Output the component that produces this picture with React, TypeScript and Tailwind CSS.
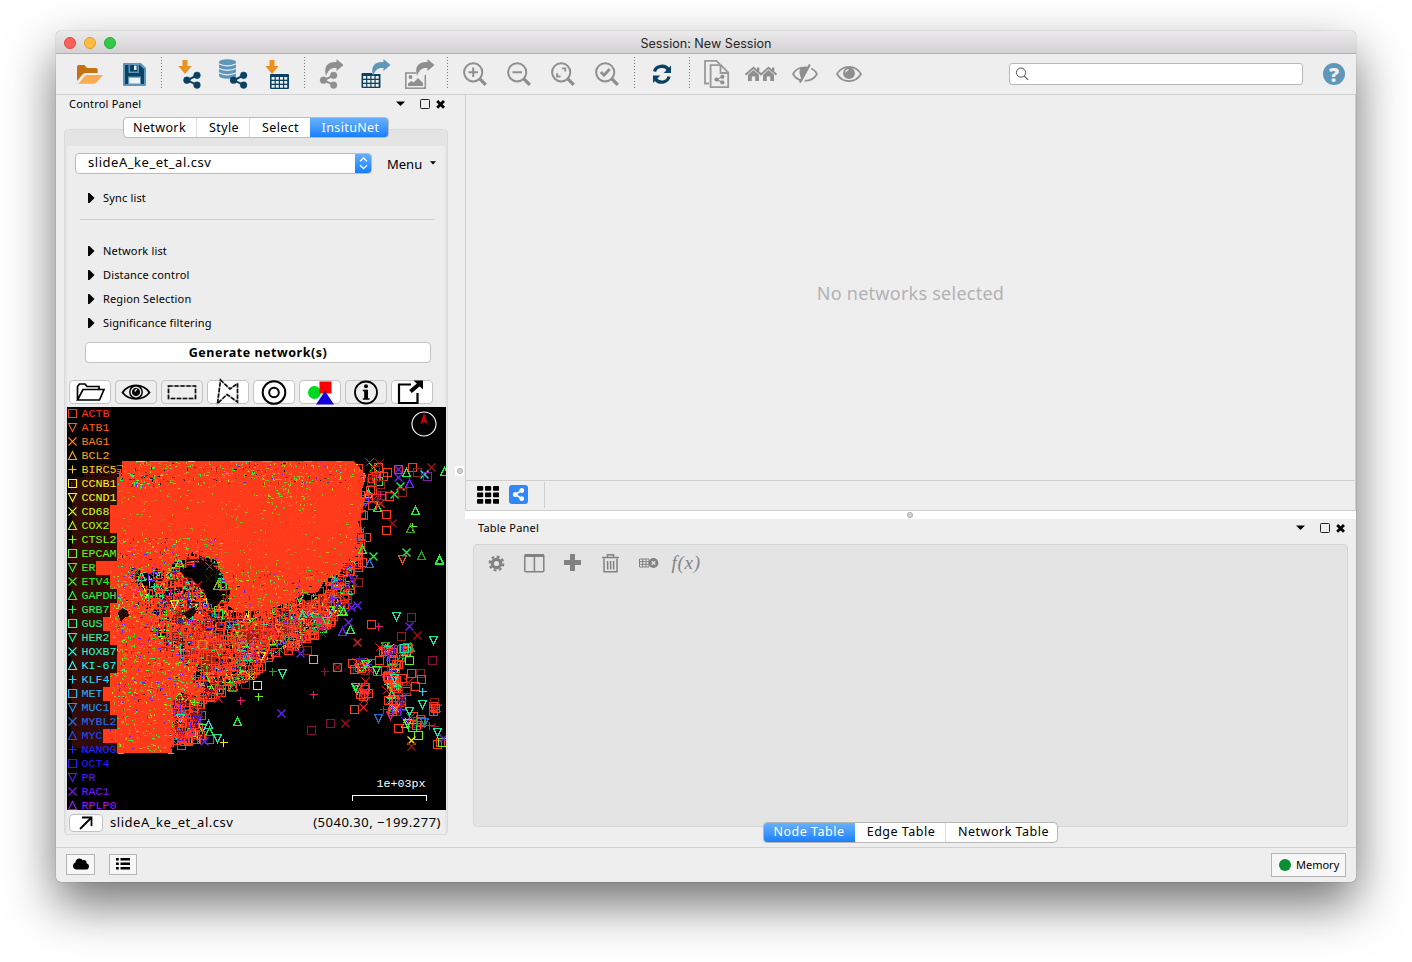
import React, { useMemo } from "react";
import { FaCloud, FaShareAlt } from "react-icons/fa";

const GRAY = "#8f8f8f";
const NAVY = "#0b4264";
const BLUE = "#5f97bb";
const ORANGE = "#ea9123";

/* ---------- toolbar drawings; coordinates are relative to the window bar ---------- */

function Cell({ from, to, children }: { from: number; to: number; children: React.ReactNode }) {
  return (
    <svg className="shrink-0" width={to - from} height={40} viewBox={`${from} 54 ${to - from} 40`}>
      {children}
    </svg>
  );
}

function Share({ x, y, c }: { x: number; y: number; c: string }) {
  return (
    <g fill={c} stroke={c}>
      <path d={`M${x + 13.5} ${y + 3.8} L${x + 3.8} ${y + 8.8} L${x + 13.5} ${y + 13.4}`} fill="none" strokeWidth="2" />
      <circle cx={x + 13.6} cy={y + 3.8} r="3.4" strokeWidth=".4" />
      <circle cx={x + 3.5} cy={y + 8.7} r="3.4" strokeWidth=".4" />
      <circle cx={x + 13.6} cy={y + 13.6} r="3.4" strokeWidth=".4" />
    </g>
  );
}

function Grid({ x, y, c }: { x: number; y: number; c: string }) {
  return (
    <g>
      <rect x={x} y={y} width="19" height="15" rx="1" fill={c} />
      {[0, 1, 2].map((r) =>
        [0, 1, 2, 3].map((k) => (
          <rect key={`${r}${k}`} x={x + 1.6 + k * 4.2} y={y + 3 + r * 4} width="3" height="2.7" fill="#eee" />
        )),
      )}
    </g>
  );
}

const Down = ({ x }: { x: number }) => (
  <path d={`M${x + 4.5} 60h5v6h4.2L${x + 7} 74L${x + 0.3} 66h4.2z`} fill={ORANGE} />
);

const Curl = ({ x, c }: { x: number; c: string }) => (
  <path
    d={`M${x} 76C${x - 3} 65 ${x + 3} 61.5 ${x + 10.5} 62V59L${x + 17.5} 65L${x + 10.5} 71V68C${x + 4.5} 67.6 ${x + 2.4} 70 ${x} 76z`}
    fill={c}
  />
);

const Lens = ({ x, children }: { x: number; children: React.ReactNode }) => (
  <g fill="none" stroke={GRAY}>
    <circle cx={x + 10.2} cy={72.3} r="9.1" strokeWidth="2" />
    <path d={`M${x + 17} 79L${x + 22.8} 84.8`} strokeWidth="3.2" />
    <g strokeWidth="2">{children}</g>
  </g>
);

const Sep = ({ x }: { x: number }) => (
  <path d={`M${x + 0.5} 57V90`} stroke="#777" strokeWidth="1" strokeDasharray="1 2" />
);

function Toolbar() {
  return (
    <div className="flex h-[41px] shrink-0 border-b border-[#d1d1d1] bg-[#eeeeee]">
      <Cell from={56} to={113}>
        <path d="M77 81V66.5Q77 65 78.5 65H84.5L87 68H96Q97.7 68 97.7 70V73H86Q83.5 73 82 75z" fill="#c57214" />
        <path d="M78.3 83.8L84.8 76Q85.6 75 87 75H103L96.3 82.7Q95.3 83.8 94 83.8z" fill="#fbab52" />
      </Cell>
      <Cell from={113} to={156}>
        <path d="M123 64Q123 63 124 63H141L146 68V85Q146 86 145 86H124Q123 86 123 85z" fill={BLUE} />
        <path d="M125 65H139.8L144 69.2V84H125z" fill={NAVY} />
        <path d="M128.5 64.5H139V73H128.5zM128 76.5H141V84H128z" fill={BLUE} />
        <path d="M130 65H137.5V71.5H130z" fill={NAVY} />
        <path d="M134 65.5H136.6V70H134z" fill="#e5eef4" />
        <path d="M129.2 77.8H140V83.5H129.2z" fill="#eef3f6" />
      </Cell>
      <Cell from={156} to={212}>
        <Sep x={161} />
        <Down x={178} />
        <Share x={183.4} y={71.5} c={NAVY} />
      </Cell>
      <Cell from={212} to={258}>
        <path d="M219 62.5V75.5C219 79.8 236 79.8 236 75.5V62.5z" fill={BLUE} />
        <ellipse cx="227.5" cy="62" rx="8.7" ry="2.8" fill={BLUE} />
        <path d="M218.5 63.8Q227.5 68 236.5 63.8M218.5 68.3Q227.5 72.5 236.5 68.3M218.5 72.8Q227.5 77 236.5 72.8" fill="none" stroke="#eee" strokeWidth="1.2" />
        <Share x={230} y={71.5} c={NAVY} />
      </Cell>
      <Cell from={258} to={312}>
        <Down x={265} />
        <Grid x={270} y={74} c={NAVY} />
        <Sep x={304} />
      </Cell>
      <Cell from={312} to={355}>
        <Share x={320} y={71.5} c={GRAY} />
        <Curl x={326} c={GRAY} />
      </Cell>
      <Cell from={355} to={399}>
        <Grid x={361.5} y={73} c={NAVY} />
        <path d="M372 71H382V74H372z" fill="#eee" />
        <Curl x={373} c={BLUE} />
      </Cell>
      <Cell from={399} to={453}>
        <rect x="405.8" y="73" width="19.5" height="15.2" fill="none" stroke={GRAY} strokeWidth="1.5" />
        <circle cx="410.5" cy="77" r="1.9" fill={GRAY} />
        <path d="M408 86V83.5L411.5 81L413.5 82.5L418 78L423 83V86z" fill={GRAY} />
        <path d="M416 71.5H426V75H416z" fill="#eee" />
        <Curl x={417} c={GRAY} />
        <Sep x={447} />
      </Cell>
      <Cell from={453} to={497}>
        <Lens x={463}><path d="M468.5 72.3H478M473.2 67.5V77" /></Lens>
      </Cell>
      <Cell from={497} to={541}>
        <Lens x={507}><path d="M512.5 72.3H522" /></Lens>
      </Cell>
      <Cell from={541} to={585}>
        <Lens x={551}>
          <path d="M562 68.3H565.3V71.5M560.5 76.5H557V73.2" strokeWidth="1.8" />
        </Lens>
      </Cell>
      <Cell from={585} to={641}>
        <Lens x={595}><path d="M600.8 72L604 75.3L609.8 69" strokeWidth="2.8" /></Lens>
        <Sep x={634} />
      </Cell>
      <Cell from={641} to={697}>
        <path d="M654.5 71.5C656 65.5 665 64.5 668.3 69.5M669 76.5C667.5 83 659 84 655.4 79" fill="none" stroke={NAVY} strokeWidth="3.3" />
        <path d="M671 65.5V73H663.7zM653 83V75.5H660.3z" fill={NAVY} />
        <Sep x={689} />
      </Cell>
      <Cell from={697} to={737}>
        <path d="M709 83.5H705V60.8H716.5L720 64.5" fill="none" stroke="#999" strokeWidth="1.8" />
        <path d="M710.6 65.2H721L728.2 72.5V87.2H710.6zM720.5 65.5V73H728" fill="#eee" stroke="#999" strokeWidth="1.8" />
        <g transform="translate(714.5 74.5) scale(.58)"><Share x={0} y={0} c={GRAY} /></g>
      </Cell>
      <Cell from={737} to={785}>
        {[746, 761].map((x) => (
          <g key={x}>
            <path d={`M${x - 0.5} 74.8L${x + 7.5} 67.8L${x + 15.5} 74.8`} fill="none" stroke={GRAY} strokeWidth="2" />
            <path d={`M${x + 2} 74.8L${x + 7.5} 70L${x + 13} 74.8V81H${x + 9.2}V76.5H${x + 5.8}V81H${x + 2}z`} fill={GRAY} />
            <path d={`M${x + 11} 67.5h2.3v4h-2.3z`} fill={GRAY} />
          </g>
        ))}
      </Cell>
      <Cell from={785} to={829}>
        <path d="M793 74C798 65 812 65 817 74C812 83 798 83 793 74z" fill="none" stroke={GRAY} strokeWidth="1.6" />
        <path d="M800 68.5C798.5 75 801 79 804 80.5L809 68.2Q804 66 800 68.5z" fill={GRAY} />
        <path d="M811.3 66L802.5 82.5" stroke="#eee" strokeWidth="2.2" />
        <path d="M809.8 64.5L799.8 82.5" stroke={GRAY} strokeWidth="2.2" />
      </Cell>
      <Cell from={829} to={879}>
        <path d="M837 74C842.5 64.5 855.5 64.5 861 74C855.5 83.5 842.5 83.5 837 74z" fill="none" stroke={GRAY} strokeWidth="1.7" />
        <circle cx="849" cy="73.2" r="5.9" fill={GRAY} />
        <path d="M845.6 72.5Q846 70 848.5 69.6" stroke="#eee" strokeWidth="1.2" fill="none" />
      </Cell>
      <div className="flex flex-1 items-center justify-end pr-[11px]">
        <div className="flex h-[22px] w-[294px] items-center rounded-[3px] border border-[#b9b9b9] bg-white pl-[5px]">
          <svg width="15" height="14" viewBox="0 0 15 14" fill="none" stroke="#555">
            <circle cx="6" cy="5.6" r="4.6" strokeWidth="1" />
            <path d="M9.3 9.1L13 12.8" strokeWidth="1.2" />
          </svg>
        </div>
        <div className="ml-5 flex size-[22px] items-center justify-center rounded-full bg-[#5f97bb] pt-px font-['Open_Sans',sans-serif] text-[20px] leading-none font-extrabold text-[#eeeeee]">
          ?
        </div>
      </div>
    </div>
  );
}

/* ---------- spatial plot ---------- */

type Kind = "s" | "u" | "d" | "x" | "p";
type Pt = [number, number];

const GENES = [
  "ACTB", "ATB1", "BAG1", "BCL2", "BIRC5", "CCNB1", "CCND1", "CD68", "COX2", "CTSL2",
  "EPCAM", "ER", "ETV4", "GAPDH", "GRB7", "GUS", "HER2", "HOXB7", "KI-67", "KLF4",
  "MET", "MUC1", "MYBL2", "MYC", "NANOG", "OCT4", "PR", "RAC1", "RPLP0",
];
const KINDS: Kind[] = ["s", "d", "x", "u", "p"];

const glyph = (k: Kind, x: number, y: number) => {
  const a = Math.round(x) + 0.5;
  const b = Math.round(y) + 0.5;
  if (k === "s") return `M${a - 4} ${b - 4}h8v8h-8z`;
  if (k === "u") return `M${a} ${b - 4}l4 8h-8z`;
  if (k === "d") return `M${a} ${b + 4}l4 -8h-8z`;
  if (k === "x") return `M${a - 4} ${b - 4}l8 8m0 -8l-8 8`;
  return `M${a - 4} ${b}h8m-4 -4v8`;
};

const COLORS: Record<string, string> = {
  R: "#ff3b1b", r: "#8b2412", e: "#e01f1f", k: "#9c1616", G: "#22f046", g: "#2f9a26", L: "#6cf01e",
  T: "#1ee8a0", P: "#6a22f0", p: "#4420a0", M: "#e01870", m: "#8a1040", Y: "#f5e61e", C: "#20d8f0",
  B: "#1d72d8", O: "#e0561a", V: "#8a1ea8",
};

const MARKS = `sR378,467 sr375,470 sR387,472 sR383,476 sR398,469 xP398,469 sR412,467 sr417,472 xk431,467 uG406,472
xC424,474 sV427,476 uG444,471 xP398,477 sr380,484 xG400,486 uP409,483 xG394,494 sR389,496 sr402,492 uG377,507 xe380,503
sR372,505 sR386,514 uG415,510 xk392,523 pL412,526 ug410,528 sR386,530 xG373,556 xG406,552 dO402,559 ug421,555 uG439,559
uG439,560 sR362,562 uB369,563 sr358,582 xe346,600 xP357,605 xP351,607 sR370,490 sR368,497 xe373,475 sr371,481 sR366,537
sr361,537 uG362,549 dT396,616 sr411,617 xP409,626 sR371,624 pM378,626 uG350,629 xP348,622 uG343,611 xe334,614 sr401,636
xk417,635 dT433,640 xe357,642 sg317,620 sr307,650 sL313,659 xP300,653 sL337,667 xk337,667 sR337,667 pm324,671 pg272,671
dT282,673 pM313,694 xP281,713 sm311,730 sm330,723 xk345,723 sY257,685 pL258,696 dB378,718 sR354,709 xe363,707 sL409,660
sm432,660 sr420,673 sR421,679 sR415,686 pC422,691 sR406,691 sr406,689 xk402,704 dT422,704 dT409,711 sR433,706 sr434,702
xe433,707 sR435,708 dB424,722 pM429,725 pm434,726 sR398,728 sL418,735 xY411,740 xk411,746 dT437,732 sR437,744 sR440,742
sL442,742 xP443,738 uC208,724 uG209,731 sg209,739 dT217,738 pY223,742 xP204,741 uG237,721 pM240,700 xe218,698 sr245,684
sR232,687 sr197,710 sR193,707 sR200,735`
  .trim()
  .split(/\s+/)
  .map((m) => {
    const [x, y] = m.slice(2).split(",").map(Number);
    return { k: m[0] as Kind, c: m[1], x, y };
  });

const TISSUE: Pt[] = [
  [74, 480], [90, 470], [118, 466], [130, 464], [355, 464], [364, 475], [366, 500], [361, 530], [358, 560], [352, 590],
  [340, 612], [318, 632], [298, 646], [270, 656], [250, 682], [222, 692], [200, 704], [202, 735], [190, 748], [74, 748],
];
const CORE: Pt[] = [
  [122, 461], [354, 461], [360, 468], [366, 476], [362, 490], [363, 505], [358, 520], [360, 532], [353, 545], [354, 556],
  [344, 562], [340, 573], [326, 578], [318, 592], [304, 594], [290, 602], [276, 606], [262, 613], [250, 610], [240, 613],
  [228, 606], [230, 590], [222, 575], [216, 560], [206, 558], [192, 552], [184, 560], [174, 562], [168, 572], [156, 568],
  [150, 574], [138, 570], [128, 576], [117, 564], [117, 479], [122, 476],
];
const WEST: Pt[] = [
  [72, 480], [117, 474], [120, 560], [134, 566], [132, 580], [146, 592], [142, 606], [158, 616], [150, 632], [164, 640],
  [160, 652], [178, 650], [182, 664], [196, 668], [192, 682], [206, 688], [198, 697], [180, 692], [172, 702], [174, 720],
  [170, 735], [172, 753], [117, 753], [110, 750], [72, 748],
];
const MID: Pt[][] = [
  [[178, 625], [196, 622], [208, 634], [222, 632], [226, 648], [216, 660], [224, 672], [206, 676], [198, 664], [184, 656], [188, 642]],
  [[232, 624], [256, 620], [268, 628], [288, 618], [304, 622], [292, 636], [272, 640], [262, 650], [248, 644], [236, 652], [228, 640]],
  [[300, 602], [318, 598], [332, 588], [340, 594], [328, 608], [316, 616], [302, 612]],
];
const HOLES: Pt[][] = [
  [[180, 570], [190, 566], [196, 568], [200, 560], [212, 562], [214, 567], [220, 571], [217, 582], [219, 590], [222, 598], [217, 606], [208, 603], [204, 590], [198, 588], [192, 578], [184, 577]],
  [[118, 613], [122, 608], [128, 611], [129, 616], [124, 618], [121, 623]],
  [[183, 614], [190, 609], [195, 607], [196, 613], [189, 619]],
];

const inside = (poly: Pt[], x: number, y: number) => {
  let hit = false;
  for (let i = 0, j = poly.length - 1; i < poly.length; j = i++) {
    const [xi, yi] = poly[i];
    const [xj, yj] = poly[j];
    if (yi > y !== yj > y && x < ((xj - xi) * (y - yi)) / (yj - yi) + xi) hit = !hit;
  }
  return hit;
};

const toPath = (poly: Pt[]) => `M${poly.map((p) => p.join(" ")).join("L")}z`;

function buildPlot() {
  let seed = 7331;
  const rnd = () => {
    seed = (seed * 1664525 + 1013904223) >>> 0;
    return seed / 4294967296;
  };
  const pick = (s: string) => s[Math.floor(rnd() * s.length)];
  const layers: { d: string; c: string }[] = [];
  for (let pass = 0; pass < 15; pass++) {
    const bucket: Record<string, string> = {};
    for (let n = 0; n < 330; n++) {
      const x = 72 + rnd() * 300;
      const y = 464 + rnd() * 286;
      if (!inside(TISSUE, x, y) || inside(CORE, x, y)) continue;
      if (HOLES.some((h) => inside(h, x, y)) && rnd() < 0.96) continue;
      const red = rnd() < 0.7;
      const c = red ? pick("RRRRRRre") : pick("GgLTPPpMkBYm");
      const k = red ? (c === "e" ? "x" : "s") : (pick("sudxp") as Kind);
      bucket[c] = (bucket[c] || "") + glyph(k, x, y);
    }
    for (const c of Object.keys(bucket)) layers.push({ d: bucket[c], c: COLORS[c] });
  }
  let edge = "";
  for (let n = 0; n < 60; n++) {
    const y = 468 + rnd() * 100;
    edge += glyph("s", 346 + rnd() * 14, y);
  }
  const cluster: { d: string; c: string }[] = [];
  const spots: [number, number, number, number, number][] = [
    [385, 650, 6, 6, 14], [404, 650, 6, 6, 12], [362, 668, 10, 7, 20], [393, 678, 7, 14, 34], [363, 690, 10, 9, 15],
    [394, 704, 8, 10, 22], [412, 722, 8, 6, 14], [387, 665, 20, 16, 16], [320, 617, 18, 14, 30], [374, 482, 6, 16, 14],
    [434, 707, 3, 3, 5], [188, 726, 10, 17, 22],
  ];
  for (const [cx, cy, rx, ry, count] of spots)
    for (let n = 0; n < count; n++) {
      const c = pick("RRRRRRreekPPGTgLMp");
      const k: Kind = "Rr".includes(c) ? "s" : "ek".includes(c) ? "x" : (pick("sudxp") as Kind);
      cluster.push({ d: glyph(k, cx + (rnd() + rnd() - 1) * rx * 1.4, cy + (rnd() + rnd() - 1) * ry * 1.4), c: COLORS[c] });
    }
  const specks: Record<string, string> = {};
  const speckle = (count: number, x0: number, y0: number, w: number, h: number, colors: string[], test: (x: number, y: number) => boolean) => {
    for (let n = 0; n < count; n++) {
      const x = Math.floor(x0 + rnd() * w);
      const y = Math.floor(y0 + rnd() * h);
      if (!test(x, y)) continue;
      const c = colors[Math.floor(rnd() * colors.length)];
      const len = rnd() < 0.25 ? 3 : 1 + Math.floor(rnd() * 2);
      specks[c] = (specks[c] || "") + (rnd() < 0.6 ? `M${x} ${y}h${len}v1h${-len}z` : `M${x} ${y}h1v${len}h-1z`);
    }
  };
  const olive = ["#b8941a", "#c8741a", "#8fae1c", "#c8741a", "#7ab81e", "#d2a81c"];
  const vivid = ["#46e02a", "#22f046", "#a8e01e", "#6a22f0", "#1ee8a0", "#e01870", "#180502", "#9c2a12"];
  const core = (x: number, y: number) => inside(CORE, x, y);
  speckle(560, 117, 462, 248, 150, olive, core);
  speckle(330, 117, 462, 248, 22, olive.concat(vivid), core);
  speckle(420, 117, 538, 105, 50, olive.concat(vivid), core);
  speckle(240, 225, 570, 120, 44, olive.concat(vivid), core);
  speckle(100, 262, 475, 48, 36, ["#7ab81e", "#46e02a", "#c8b01c"], () => true);
  speckle(60, 130, 474, 34, 14, vivid, core);
  speckle(850, 110, 570, 90, 182, olive.concat(vivid.slice(0, 4)), (x, y) => inside(WEST, x, y));
  speckle(2000, 117, 560, 240, 140, olive.concat(vivid, vivid), (x, y) => inside(TISSUE, x, y) && !inside(CORE, x, y) && !HOLES.some((h) => inside(h, x, y)));
  return { layers, edge, cluster, specks };
}

function Plot() {
  const { layers, edge, cluster, specks } = useMemo(buildPlot, []);
  return (
    <svg className="block shrink-0 bg-black" width="379" height="403" viewBox="67 407 379 403">
      <g shapeRendering="crispEdges" fill="none" strokeWidth="1">
        {layers.map((l, i) => (
          <path key={i} d={l.d} stroke={l.c} />
        ))}
        <path d={toPath(WEST)} fill="#ff3b1b" />
        <path d={toPath(CORE)} fill="#ff3b1b" />
        {MID.map((m, i) => (
          <path key={i} d={toPath(m)} fill="#ff3b1b" fillOpacity=".6" />
        ))}
        <path d={edge} stroke="#ff3b1b" />
        <path d="M150 461.5h18M230 461.5h22M262 461.5h10M304 461.5h8M336 461.5h6" stroke="#28d878" />
        <path d="M136 461.5h9M188 461.5h7" stroke="#e8d81c" />
        <path d="M118 753.5h6M168 753h6" stroke="#22f046" />
        {Object.entries(specks).map(([c, d]) => (
          <path key={c} d={d} fill={c} />
        ))}
        {HOLES.map((h, i) => (
          <path key={i} d={toPath(h)} fill="#000" fillOpacity=".86" />
        ))}
        <path d={glyph("x", 197, 585) + glyph("x", 209, 566)} stroke="#e01f1f" />
        <path d={glyph("u", 217, 585)} stroke="#8fae1c" />
        {cluster.map((m, i) => (
          <path key={i} d={m.d} stroke={m.c} />
        ))}
        {MARKS.map((m, i) => (
          <path key={i} d={glyph(m.k, m.x, m.y)} stroke={COLORS[m.c]} shapeRendering={m.k === "x" ? "auto" : undefined} strokeWidth={m.k === "x" ? 1.4 : 1} />
        ))}
      </g>
      {GENES.map((g, i) => {
        const color = `hsl(${8 + i * 9.5} 100% 55%)`;
        const y = 407 + i * 14;
        return (
          <g key={g}>
            <rect x="67" y={y} width={15 + g.length * 7} height="14" fill="#000" fillOpacity=".8" />
            <path d={glyph(KINDS[i % 5], 72, y + 6)} fill="none" stroke={color} strokeWidth="1.1" />
            <text x="81.5" y={y + 10} fill={color} className="font-['Liberation_Mono',monospace] text-[11.67px]">
              {g}
            </text>
          </g>
        );
      })}
      <circle cx="424" cy="424" r="12" fill="none" stroke="#fff" strokeWidth="1.1" />
      <path d="M424 412.5L427.5 424L424 421.8L420.5 424z" fill="#d40000" />
      <text x="376.5" y="787" fill="#fff" className="font-['Liberation_Mono',monospace] text-[11.67px]">
        1e+03px
      </text>
      <path d="M352.5 800.5V795.5H426.5V800.5" fill="none" stroke="#fff" shapeRendering="crispEdges" />
    </svg>
  );
}

/* ---------- shared pieces ---------- */

function PanelHeader({ title }: { title: string }) {
  return (
    <div className="flex h-[18px] shrink-0 items-center pr-0.5 pl-[13px]">
      <span className="flex-1 text-[11px] tracking-[0.2px]">{title}</span>
      <svg width="50" height="12" viewBox="0 0 50 12">
        <path d="M0 3.5h9L4.5 8z" />
        <rect x="24.5" y="1.5" width="9" height="9" rx="1" fill="none" stroke="#222" />
        <path d="M41.2 3L48 9.8M48 3L41.2 9.8" stroke="#000" strokeWidth="2.8" />
      </svg>
    </div>
  );
}

function Disclosure({ label }: { label: string }) {
  return (
    <div className="flex h-6 items-center gap-2 pl-[21px] text-[11px] tracking-[0.16px]">
      <svg width="7" height="10" viewBox="0 0 7 10">
        <path d="M0 0h1.5L6.5 5L1.5 10H0z" />
      </svg>
      {label}
    </div>
  );
}

const toolIcons: { flat: boolean; art: React.ReactNode }[] = [
  {
    flat: false,
    art: <path d="M8.5 20V6.5L10.5 4H16L18 6.5H30V9M8.5 20L14 9.5H35L30.5 20z" fill="none" stroke="#000" strokeWidth="1.7" />,
  },
  {
    flat: true,
    art: (
      <g fill="none" stroke="#000">
        <path d="M7.5 12.5C14 3 28 3 34.5 12.5C28 21 14 21 7.5 12.5z" strokeWidth="1.8" />
        <circle cx="21" cy="12" r="6.2" strokeWidth="1.5" />
        <circle cx="21" cy="12" r="3.6" fill="#000" />
        <path d="M20 11.5Q20.4 9.5 22 9.5" stroke="#fff" strokeWidth="1.3" />
      </g>
    ),
  },
  {
    flat: true,
    art: (
      <g fill="none">
        <rect x="7.5" y="6" width="27" height="12.5" stroke="#999" strokeWidth="1.6" />
        <rect x="7.5" y="6" width="27" height="12.5" stroke="#111" strokeWidth="1.6" strokeDasharray="4 2" />
      </g>
    ),
  },
  {
    flat: false,
    art: (
      <g fill="none">
        <path d="M13.5 0L23 9L30.5 3.5V22L20 14.5L10.5 23.5z" stroke="#999" strokeWidth="1.6" />
        <path d="M13.5 0L23 9L30.5 3.5V22L20 14.5L10.5 23.5z" stroke="#111" strokeWidth="1.6" strokeDasharray="4 1.6" />
      </g>
    ),
  },
  {
    flat: false,
    art: (
      <g fill="none" stroke="#000" strokeWidth="2">
        <circle cx="21" cy="12.5" r="11.3" />
        <circle cx="21" cy="12.5" r="4.8" />
      </g>
    ),
  },
  {
    flat: false,
    art: (
      <g>
        <circle cx="15.5" cy="12.5" r="6.5" fill="#00d820" />
        <path d="M20.5 1.5H32.5V13.5H20.5z" fill="#f00" />
        <path d="M26 11L35 24.5H17z" fill="#1400d8" />
      </g>
    ),
  },
  {
    flat: true,
    art: (
      <g>
        <circle cx="21" cy="12.5" r="11" fill="none" stroke="#000" strokeWidth="1.8" />
        <circle cx="21" cy="6.3" r="2" />
        <path d="M17.8 9.8H23V18.2H24.5V19.7H17.8V18.2H19.2V11.3H17.8z" />
      </g>
    ),
  },
  {
    flat: false,
    art: (
      <g>
        <path d="M20 4.5H8V23H26.5V13" fill="none" stroke="#000" strokeWidth="2.2" />
        <path d="M19.5 11.5L29 3.5" stroke="#000" strokeWidth="4" />
        <path d="M22.5 .5H32V9.5z" />
      </g>
    ),
  },
];

function ControlPanel() {
  return (
    <div className="flex w-[392px] shrink-0 flex-col">
      <PanelHeader title="Control Panel" />
      <div className="z-10 mt-1 -mb-[9px] ml-[67px] flex h-[21px] w-[266px] shrink-0 overflow-hidden rounded-[4px] border border-[#bcbcbc] bg-white text-[12.5px] leading-[19px] tracking-[0.38px]">
        <span className="w-[73px] border-r border-[#dcdcdc] pr-px text-center">Network</span>
        <span className="w-[53px] border-r border-[#dcdcdc] pl-0.5 text-center">Style</span>
        <span className="w-[61px] text-center">Select</span>
        <span className="-m-px h-[21px] flex-1 bg-linear-to-b from-[#6ab3fb] to-[#0f7cfd] pt-px pl-0.5 text-center text-white">InsituNet</span>
      </div>
      <div className="ml-2 flex h-[706px] w-[384px] flex-col rounded-[4px] border border-[#dadada] bg-[#e4e4e4] px-[2px] pt-4">
        <div className="flex min-h-0 flex-1 flex-col bg-[#ededed]">
          <div className="flex h-[34px] shrink-0 items-center pl-2">
            <div className="flex h-[21px] w-[297px] items-center overflow-hidden rounded-[4px] border border-[#bcbcbc] bg-white">
              <span className="flex-1 pl-3 text-[13px] tracking-[0.53px]">slideA_ke_et_al.csv</span>
              <svg className="-my-px -mr-px" width="17" height="21" viewBox="0 0 17 21">
                <defs>
                  <linearGradient id="knob" x1="0" y1="0" x2="0" y2="1">
                    <stop offset="0" stopColor="#6ab3fb" />
                    <stop offset="1" stopColor="#0f7cfd" />
                  </linearGradient>
                </defs>
                <rect width="17" height="21" fill="url(#knob)" />
                <path d="M5 8.2L8.5 5L12 8.2M5 12.3L8.5 15.5L12 12.3" fill="none" stroke="#fff" strokeWidth="1.3" />
              </svg>
            </div>
            <span className="ml-[15px] pt-[3px] text-[13px]">Menu</span>
            <svg className="ml-2" width="6" height="4" viewBox="0 0 6 4">
              <path d="M0 .3h6L3 3.6z" />
            </svg>
          </div>
          <div className="mt-1.5">
            <Disclosure label="Sync list" />
          </div>
          <div className="mt-[9px] mr-2.5 ml-[13px] h-px shrink-0 bg-[#d0d0d0]" />
          <div className="mt-[19px]">
            <Disclosure label="Network list" />
            <Disclosure label="Distance control" />
            <Disclosure label="Region Selection" />
            <Disclosure label="Significance filtering" />
          </div>
          <div className="mt-[7px] ml-[18px] flex h-[21px] w-[346px] shrink-0 items-center justify-center rounded-[4px] border border-[#c2c2c2] bg-white pt-px text-[12.5px] font-bold tracking-[0.52px]">
            Generate network(s)
          </div>
          <div className="mt-[17px] mb-[2px] ml-[2px] flex h-[25px] shrink-0 gap-1">
            {toolIcons.map((t, i) => (
              <div
                key={i}
                className={
                  t.flat
                    ? "h-6 w-[42px] rounded-[4px] border border-[#c4c4c4] bg-[#eeeeee]"
                    : "h-6 w-[42px] rounded-[4px] border border-[#c4c4c4] bg-white"
                }
              >
                <svg className="-m-px overflow-visible" width="42" height="24" viewBox="0 0 42 24">
                  {t.art}
                </svg>
              </div>
            ))}
          </div>
          <Plot />
          <div className="flex h-6 shrink-0 items-center pt-px pr-1 pl-[2px] text-[13px]">
            <div className="flex h-[18px] w-[34px] items-center justify-center rounded-[4px] border border-[#c2c2c2] bg-white">
              <svg width="14" height="14" viewBox="0 0 14 14" fill="none" stroke="#000" strokeWidth="1.8">
                <path d="M1 13L12.5 1.5M3 1.5H12.5V10" />
              </svg>
            </div>
            <span className="ml-[7px] flex-1 tracking-[0.53px]">slideA_ke_et_al.csv</span>
            <span className="tracking-[0.5px]">(5040.30, −199.277)</span>
          </div>
        </div>
      </div>
    </div>
  );
}

function TableTools() {
  return (
    <svg className="mt-[7px] ml-[13px] block" width="220" height="22" viewBox="487 552 220 22" fill="#828282">
      <g stroke="#828282" fill="none">
        <circle cx="496.5" cy="563.5" r="4.2" strokeWidth="3.2" />
        <circle cx="496.5" cy="563.5" r="6.8" strokeWidth="2.2" strokeDasharray="2.9 2.44" />
        <rect x="524.8" y="554.8" width="19" height="17" rx="1" strokeWidth="1.5" />
        <path d="M525 555.5H544" strokeWidth="3" />
        <path d="M534.4 556V572" strokeWidth="1.5" />
        <path d="M572.5 554V571M564 562.5H581" strokeWidth="5" />
        <path d="M602 557.5H619M607.5 557V554.7H613.5V557M604 558.5V571.8H617V558.5M607.6 561V569.5M610.6 561V569.5M613.6 561V569.5" strokeWidth="1.5" />
        <path d="M639.5 559H649V567H639.5zM639.5 561.5H649M639.5 564.3H649M642.7 559V567M646 559V567" strokeWidth="1" />
      </g>
      <circle cx="653.5" cy="563" r="4.9" />
      <path d="M651.7 561.2L655.3 564.8M655.3 561.2L651.7 564.8" stroke="#e4e4e4" strokeWidth="1.3" />
      <text x="671.5" y="569" className="font-['Liberation_Serif',serif] text-[19px] italic" textLength="28.5">
        f(x)
      </text>
    </svg>
  );
}

export default function App() {
  return (
    <div className="h-[962px] w-[1412px] overflow-hidden bg-white pt-[31px] pl-14 font-['Noto_Sans',sans-serif] text-black">
      <div className="flex h-[851px] w-[1300px] flex-col overflow-hidden rounded-[5px] bg-[#eeeeee] shadow-[0_22px_50px_rgba(0,0,0,0.56),0_0_1px_rgba(0,0,0,0.6)]">
        <div className="flex h-[23px] shrink-0 items-center border-b border-[#b1afb1] bg-linear-to-b from-[#ebeaeb] to-[#d3d1d3]">
          <div className="flex w-[72px] gap-2 pt-0.5 pl-2">
            <span className="size-3 rounded-full border border-[#e2463f] bg-[#fc605b]" />
            <span className="size-3 rounded-full border border-[#dfa023] bg-[#fdbc40]" />
            <span className="size-3 rounded-full border border-[#1fae36] bg-[#34c84a]" />
          </div>
          <span className="flex-1 pt-1 pr-[72px] text-center font-['Inter',sans-serif] text-[12.6px] text-[#262626]">Session: New Session</span>
        </div>
        <Toolbar />
        <div className="flex min-h-0 flex-1">
          <ControlPanel />
          <div className="flex w-[17px] shrink-0 flex-col items-end pr-px">
            <div className="mt-[371px] flex h-[10px] w-[9px] items-center justify-center bg-white">
              <span className="size-[6px] rounded-full border border-[#aaa] bg-[#d4d4d4]" />
            </div>
          </div>
          <div className="flex flex-1 flex-col">
            <div className="flex h-[416px] shrink-0 flex-col border-r border-b border-l border-[#cfcfcf]">
              <div className="flex flex-1 items-center justify-center pt-[11px] text-[18px] tracking-[0.25px] text-[#b2b2b2]">No networks selected</div>
              <div className="flex h-[30px] items-center border-t border-[#d0d0d0] pb-0.5 pl-[11px]">
                <svg width="22" height="18" viewBox="0 0 22 18">
                  {[0, 6.5, 13].map((y) => [0, 8, 16].map((x) => <rect key={`${x}-${y}`} x={x} y={y} width="6.2" height="4.8" rx="1" />))}
                </svg>
                <div className="ml-2.5 flex size-[19px] items-center justify-center rounded-[3px] bg-[#3087fc] text-[13px] text-white">
                  <FaShareAlt />
                </div>
                <div className="ml-4 h-[26px] w-px bg-[#cfcfcf]" />
              </div>
            </div>
            <div className="flex h-2 shrink-0 items-center justify-center bg-white pr-0.5">
              <span className="size-[6px] rounded-full border border-[#aaa] bg-[#d4d4d4]" />
            </div>
            <div className="pr-2">
              <PanelHeader title="Table Panel" />
            </div>
            <div className="mt-[7px] ml-2 h-[283px] w-[875px] shrink-0 rounded-[4px] border border-[#d6d6d6] bg-[#e4e4e4]">
              <TableTools />
            </div>
            <div className="z-10 -mt-[5px] ml-[298px] flex h-[21px] w-[295px] shrink-0 overflow-hidden rounded-[4px] border border-[#b6b6b6] bg-white text-[12.5px] leading-[18px] tracking-[0.5px]">
              <span className="-m-px h-[21px] w-[92px] bg-linear-to-b from-[#6ab3fb] to-[#0f7cfd] pt-px text-center text-white">Node Table</span>
              <span className="ml-px w-[91px] border-r border-[#dcdcdc] pl-0.5 text-center">Edge Table</span>
              <span className="flex-1 pl-1 text-center">Network Table</span>
            </div>
          </div>
        </div>
        <div className="flex h-[35px] shrink-0 items-center border-t border-[#d1d1d1] pr-2.5 pl-2.5">
          <div className="mb-0.5 flex h-[21px] w-[29px] items-center justify-center border border-[#b5b5b5] bg-[#f7f7f7] text-[16px]">
            <FaCloud />
          </div>
          <div className="mb-0.5 ml-3.5 flex h-[21px] w-7 items-center justify-center border border-[#b5b5b5] bg-[#f7f7f7]">
            <svg width="14" height="12" viewBox="0 0 14 12">
              {[0, 4.5, 9].map((y) => (
                <path key={y} d={`M0 ${y}h2.8v2.6h-2.8zM4.5 ${y}h9.5v2.6h-9.5z`} />
              ))}
            </svg>
          </div>
          <div className="ml-auto flex h-6 w-[75px] items-center border border-[#b5b5b5] bg-[#f7f7f7] pl-[7px] text-[11px]">
            <span className="mr-[5px] size-3 rounded-full bg-[#0a8f34]" />
            Memory
          </div>
        </div>
      </div>
    </div>
  );
}
